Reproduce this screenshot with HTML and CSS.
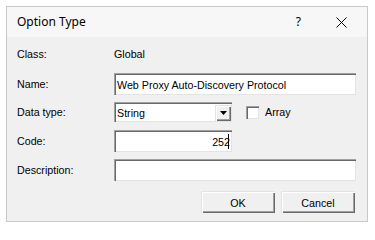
FILE: index.html
```html
<!DOCTYPE html>
<html>
<head>
<meta charset="utf-8">
<link rel="stylesheet" href="styles.css">
</head>
<body>
<div class="dialog">
  <div class="titlebar">
    <span class="title">Option Type</span>
    <span class="help">?</span>
    <svg class="close" width="11" height="11" viewBox="0 0 11 11"><path d="M0.5 0.5 L10.5 10.5 M10.5 0.5 L0.5 10.5" stroke="#000" stroke-width="1" fill="none"/></svg>
  </div>
  <div class="body">
    <div class="row row-class">
      <span class="label">Class:</span>
      <span class="value">Global</span>
    </div>
    <div class="row row-name">
      <span class="label">Name:</span>
      <div class="field sunken wide"><span class="text">Web Proxy Auto-Discovery Protocol</span></div>
    </div>
    <div class="row row-type">
      <span class="label">Data type:</span>
      <div class="field sunken select"><span class="text">String</span>
        <div class="dd raised"><svg width="7" height="4" viewBox="0 0 7 4"><path d="M0 0 H7 L3.5 4 Z" fill="#000"/></svg></div>
      </div>
      <div class="check sunken"></div>
      <span class="check-label">Array</span>
    </div>
    <div class="row row-code">
      <span class="label">Code:</span>
      <div class="field sunken code"><span class="text">252</span><span class="caret"></span></div>
    </div>
    <div class="row row-desc">
      <span class="label">Description:</span>
      <div class="field sunken wide"></div>
    </div>
    <div class="buttons">
      <div class="btn raised default">OK</div>
      <div class="btn raised">Cancel</div>
    </div>
  </div>
</div>
</body>
</html>
```
FILE: styles.css
```css
html, body {
  margin: 0;
  padding: 0;
  background: #ffffff;
}
body {
  font-family: "Liberation Sans", Arial, sans-serif;
  font-size: 10.7px;
  color: #000;
}
.dialog {
  margin: 6px 0 0 6px;
  width: 362px;
  height: 216px;
  box-sizing: border-box;
  border: 1px solid #c9c9c9;
  background: #f0f0f0;
  display: flex;
  flex-direction: column;
}
.titlebar {
  height: 30px;
  background: #f7f7f7;
  display: flex;
  align-items: center;
  padding-left: 10px;
  font-family: "Noto Sans", "Open Sans", sans-serif;
  font-size: 12px;
}
.title {
  flex: 1;
  margin-top: -1px;
}
.help {
  margin-right: 35px;
  margin-top: -2px;
}
.close {
  margin-right: 20px;
}
.body {
  display: flex;
  flex-direction: column;
  padding: 0 11px 0 10px;
}
.row {
  display: flex;
  align-items: center;
}
.label {
  width: 97px;
  flex: none;
}
.row-class { height: 22px; margin-top: 6px; }
.row-name { height: 22px; margin-top: 8px; }
.row-type { height: 20px; margin-top: 7px; }
.row-code { height: 22px; margin-top: 8px; }
.row-desc { height: 22px; margin-top: 7px; }
.sunken {
  background: #fff;
  box-shadow: inset 1px 1px 0 #a0a0a0, inset 2px 2px 0 #696969, inset -1px -1px 0 #e3e3e3, inset -2px -2px 0 #ffffff;
}
.raised {
  background: #f0f0f0;
  box-shadow: inset 1px 1px 0 #e3e3e3, inset 2px 2px 0 #ffffff, inset -1px -1px 0 #696969, inset -2px -2px 0 #a0a0a0;
}
.field {
  box-sizing: border-box;
  height: 100%;
  display: flex;
  align-items: center;
  padding: 1px 2px 0 3px;
  white-space: nowrap;
}
.wide { flex: 1; }
.select {
  width: 118px;
  position: relative;
}
.select .text { flex: 1; }
.dd {
  width: 16px;
  height: 16px;
  margin-right: -1px;
  display: flex;
  align-items: center;
  justify-content: center;
}
.dd svg { margin-top: 1px; }
.check {
  width: 13px;
  height: 13px;
  margin-left: 14px;
  box-sizing: border-box;
  flex: none;
}
.check-label {
  margin-left: 6px;
}
.code {
  width: 118px;
  justify-content: flex-end;
  padding-right: 3px;
}
.caret {
  display: inline-block;
  width: 1px;
  height: 15px;
  background: #000;
  margin-left: -2px;
}
.buttons {
  display: flex;
  justify-content: flex-end;
  gap: 6px;
  margin-top: 10px;
  padding-right: 1px;
}
.btn {
  width: 74px;
  height: 22px;
  box-sizing: border-box;
  display: flex;
  align-items: center;
  justify-content: center;
  padding-top: 1px;
}
```
